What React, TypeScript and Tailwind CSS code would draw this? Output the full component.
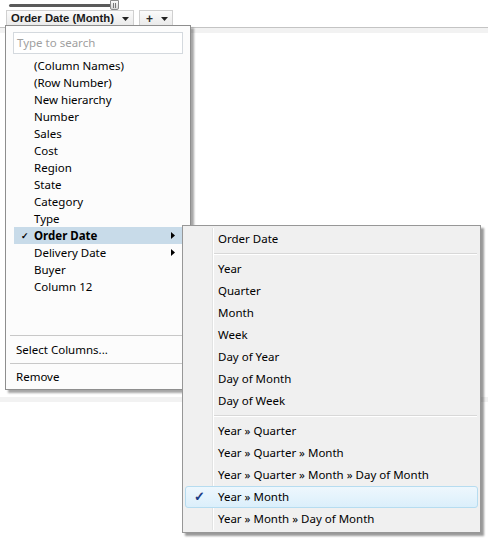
import React from 'react';

const COLUMNS = [
  '(Column Names)',
  '(Row Number)',
  'New hierarchy',
  'Number',
  'Sales',
  'Cost',
  'Region',
  'State',
  'Category',
  'Type',
  'Order Date',
  'Delivery Date',
  'Buyer',
  'Column 12',
];

const PARTS = ['Year', 'Quarter', 'Month', 'Week', 'Day of Year', 'Day of Month', 'Day of Week'];

const HIERARCHIES = [
  'Year » Quarter',
  'Year » Quarter » Month',
  'Year » Quarter » Month » Day of Month',
  'Year » Month',
  'Year » Month » Day of Month',
];

function Caret() {
  return (
    <svg width="7" height="4" viewBox="0 0 7 4" className="block">
      <path d="M0 0h7L3.5 4z" fill="#222" />
    </svg>
  );
}

function RightArrow() {
  return (
    <svg width="4" height="7" viewBox="0 0 4 7" className="block">
      <path d="M0 0v7l4-3.5z" fill="#000" />
    </svg>
  );
}

function Toolbar() {
  return (
    <div className="relative h-[27px]">
      {/* slider */}
      <div className="absolute left-[9px] top-[4px] h-[3px] w-[104px] rounded-full bg-[#5a5a5a]" />
      <div className="absolute left-[110px] top-0 flex h-[10px] w-[9px] items-center justify-center gap-px rounded-b-[2px] border border-[#8a8a8a] bg-gradient-to-b from-[#fafafa] to-[#d6d6d6]">
        <div className="h-[5px] w-px bg-[#777]" />
        <div className="h-[5px] w-px bg-[#777]" />
      </div>
      <div className="absolute left-[6px] top-[10px] flex h-[17px] items-center gap-[5px]">
        <div className="flex h-full w-[128px] items-center border border-[#d0d0d0] bg-gradient-to-b from-[#fbfbfb] to-[#e9e9e9] pl-[4px] pr-[4px] font-['Liberation_Sans',sans-serif] text-[11.3px] font-bold text-[#1a1a1a]">
          <span className="flex-1 leading-none">Order Date (Month)</span>
          <Caret />
        </div>
        <div className="flex h-full w-[34px] items-center border border-[#d0d0d0] bg-gradient-to-b from-[#fbfbfb] to-[#e9e9e9] pl-[6px] pr-[4px] font-['Liberation_Sans',sans-serif] text-[12px] font-bold text-[#2a2a2a]">
          <span className="flex-1 leading-none">+</span>
          <Caret />
        </div>
      </div>
    </div>
  );
}

function ColumnMenu() {
  return (
    <div className="absolute left-[5px] top-[25px] flex h-[365px] w-[186px] flex-col border border-[#8e8e8e] bg-[#fcfcfc] shadow-[3px_3px_2px_rgba(0,0,0,0.35)]">
      <div className="px-[7px] pt-[6px]">
        <div className="flex h-[22px] items-center border border-[#d4d9de] bg-white px-[3px] text-[11.5px] text-[#a0a0a0]">
          Type to search
        </div>
      </div>
      <div className="mt-[3px] flex flex-col">
        {COLUMNS.map((c) => {
          const active = c === 'Order Date';
          const sub = c === 'Order Date' || c === 'Delivery Date';
          return (
            <div
              key={c}
              className={`mx-[8px] flex h-[17px] items-center text-[11.5px] text-black ${
                active ? 'bg-[#c8dbe9] font-bold' : ''
              }`}
            >
              <span className="w-[20px] pl-[7px] text-[9px] font-bold">{active ? '✓' : ''}</span>
              <span className="flex-1">{c}</span>
              {sub && (
                <span className="pr-[7px]">
                  <RightArrow />
                </span>
              )}
            </div>
          );
        })}
      </div>
      <div className="flex-1" />
      <div className="mx-[4px] h-px bg-[#c8c8c8]" />
      <div className="flex h-[27px] items-center px-[10px] text-[11.5px] text-black">Select Columns...</div>
      <div className="mx-[4px] h-px bg-[#c8c8c8]" />
      <div className="flex h-[25px] items-center px-[10px] pt-[1px] text-[11.5px] text-black">Remove</div>
    </div>
  );
}

function Separator() {
  return (
    <div className="ml-[30px] mr-[3px] flex h-[8px] flex-col justify-center">
      <div className="h-px bg-[#d8d8d8]" />
      <div className="h-px bg-white" />
    </div>
  );
}

function SubRow({ label, checked }: { label: string; checked?: boolean }) {
  return (
    <div
      className={`relative mx-[2px] flex h-[22px] items-center rounded-[3px] border text-[11.5px] text-black ${
        checked
          ? 'border-[#b6dcf0] bg-gradient-to-b from-[#eef7fd] to-[#dbeffb]'
          : 'border-transparent'
      }`}
    >
      <span className="w-[27px] text-center text-[13px] font-bold text-[#1d3d86]">{checked ? '✓' : ''}</span>
      <span className="pl-[5px]">{label}</span>
    </div>
  );
}

function DateSubmenu() {
  return (
    <div className="absolute left-[182px] top-[225px] flex h-[308px] w-[299px] flex-col border border-[#979797] bg-[#f0f0f0] py-[2px] shadow-[3px_3px_2px_rgba(0,0,0,0.4)]">
      {/* gutter line */}
      <div className="absolute bottom-[2px] left-[29px] top-[2px] w-[2px] border-l border-[#e2e3e3] bg-white" />
      <SubRow label="Order Date" />
      <Separator />
      {PARTS.map((p) => (
        <SubRow key={p} label={p} />
      ))}
      <Separator />
      {HIERARCHIES.map((h) => (
        <SubRow key={h} label={h} checked={h === 'Year » Month'} />
      ))}
    </div>
  );
}

export default function App() {
  return (
    <div className="relative h-[541px] w-[488px] overflow-hidden bg-white font-['Noto_Sans',sans-serif]">
      <Toolbar />
      <div className="h-[6px] border-t border-[#c4c4c4] bg-[#f2f2f2]" />
      <div className="h-[364px] bg-white" />
      <div className="h-[5px] bg-[#f2f2f2]" />
      <ColumnMenu />
      <DateSubmenu />
    </div>
  );
}
